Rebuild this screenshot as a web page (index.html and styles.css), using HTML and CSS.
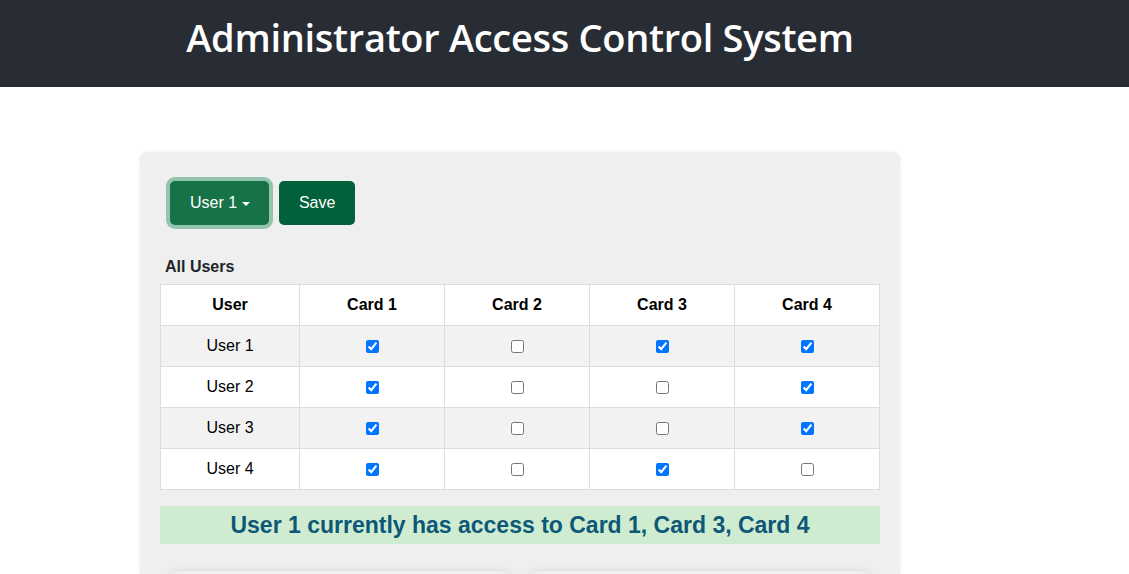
FILE: index.html
```html
<!DOCTYPE html>
<html lang="en">
<head>
<meta charset="utf-8">
<title>Administrator Access Control System</title>
<link rel="stylesheet" href="styles.css">
</head>
<body>
<header class="topbar">
  <div class="topbar-inner">
    <h1 class="title">Administrator Access Control System</h1>
  </div>
</header>
<main class="main">
  <section class="panel">
    <div class="actions">
      <button class="btn btn-user">User 1 <span class="caret"></span></button>
      <button class="btn btn-save">Save</button>
    </div>
    <div class="caption">All Users</div>
    <table class="grid">
      <thead>
        <tr><th class="c-user">User</th><th>Card 1</th><th>Card 2</th><th>Card 3</th><th>Card 4</th></tr>
      </thead>
      <tbody>
        <tr><td>User 1</td><td><input type="checkbox" checked></td><td><input type="checkbox"></td><td><input type="checkbox" checked></td><td><input type="checkbox" checked></td></tr>
        <tr><td>User 2</td><td><input type="checkbox" checked></td><td><input type="checkbox"></td><td><input type="checkbox"></td><td><input type="checkbox" checked></td></tr>
        <tr><td>User 3</td><td><input type="checkbox" checked></td><td><input type="checkbox"></td><td><input type="checkbox"></td><td><input type="checkbox" checked></td></tr>
        <tr><td>User 4</td><td><input type="checkbox" checked></td><td><input type="checkbox"></td><td><input type="checkbox" checked></td><td><input type="checkbox"></td></tr>
      </tbody>
    </table>
    <div class="message">User 1 currently has access to Card 1, Card 3, Card 4</div>
    <div class="subcards">
      <div class="subcard"></div>
      <div class="subcard"></div>
    </div>
  </section>
</main>
</body>
</html>
```
FILE: styles.css
```css
html, body {
  margin: 0;
  padding: 0;
  background: #ffffff;
  font-family: "Liberation Sans", Arial, sans-serif;
  color: #212529;
}
.topbar {
  background: #282c34;
  height: 87px;
}
.topbar-inner {
  width: 760px;
  margin-left: 140px;
  display: flex;
  justify-content: center;
}
.title {
  margin: 0;
  padding-top: 12px;
  font-family: "Open Sans", sans-serif;
  font-weight: 600;
  font-size: 38px;
  line-height: 50px;
  color: #ffffff;
  letter-spacing: -0.3px;
}
.main {
  padding-top: 65px;
}
.panel {
  width: 760px;
  margin-left: 140px;
  background: #efefef;
  border-radius: 8px;
  box-shadow: 0 0 4px rgba(0,0,0,0.08);
  padding: 29px 20px 0 20px;
  box-sizing: border-box;
  height: 430px;
  overflow: hidden;
}
.actions {
  display: flex;
  gap: 10px;
  padding-left: 10px;
}
.btn {
  font-family: "Liberation Sans", Arial, sans-serif;
  font-size: 16px;
  color: #ffffff;
  border: none;
  border-radius: 5px;
  height: 44px;
  padding: 0 20px;
  display: flex;
  align-items: center;
  gap: 5px;
}
.btn-user {
  background: #157347;
  box-shadow: 0 0 0 4px rgba(60,153,110,0.5);
  padding: 0 19px 0 20px;
}
.caret {
  display: inline-block;
  width: 0;
  height: 0;
  border-left: 4px solid transparent;
  border-right: 4px solid transparent;
  border-top: 4px solid #ffffff;
  margin-top: 1px;
}
.btn-save {
  background: #02603a;
  width: 76px;
  justify-content: center;
}
.caption {
  font-weight: bold;
  font-size: 16px;
  padding: 33px 0 8px 5px;
  color: #212529;
}
.grid {
  width: 720px;
  border-collapse: collapse;
  table-layout: fixed;
}
.grid th, .grid td {
  border: 1px solid #dddddd;
  height: 40px;
  padding: 0;
  text-align: center;
  vertical-align: middle;
  font-size: 16px;
  color: #000000;
}
.grid th.c-user { width: 138px; }
.grid thead tr { background: #ffffff; }
.grid tbody tr:nth-child(odd) { background: #f2f2f2; }
.grid tbody tr:nth-child(even) { background: #ffffff; }
.grid input {
  margin: 0;
  width: 13px;
  height: 13px;
  vertical-align: middle;
}
.message {
  margin-top: 16px;
  background: #cfecd1;
  color: #0d5876;
  font-family: "Liberation Sans", sans-serif;
  font-weight: bold;
  font-size: 23px;
  height: 38px;
  line-height: 38px;
  text-align: center;
  width: 720px;
}
.subcards {
  display: flex;
  gap: 20px;
  padding: 27px 10px 0 10px;
}
.subcard {
  flex: 1;
  height: 40px;
  background: #efefef;
  border-radius: 6px;
  box-shadow: 0 0 6px rgba(0,0,0,0.12);
}
```
